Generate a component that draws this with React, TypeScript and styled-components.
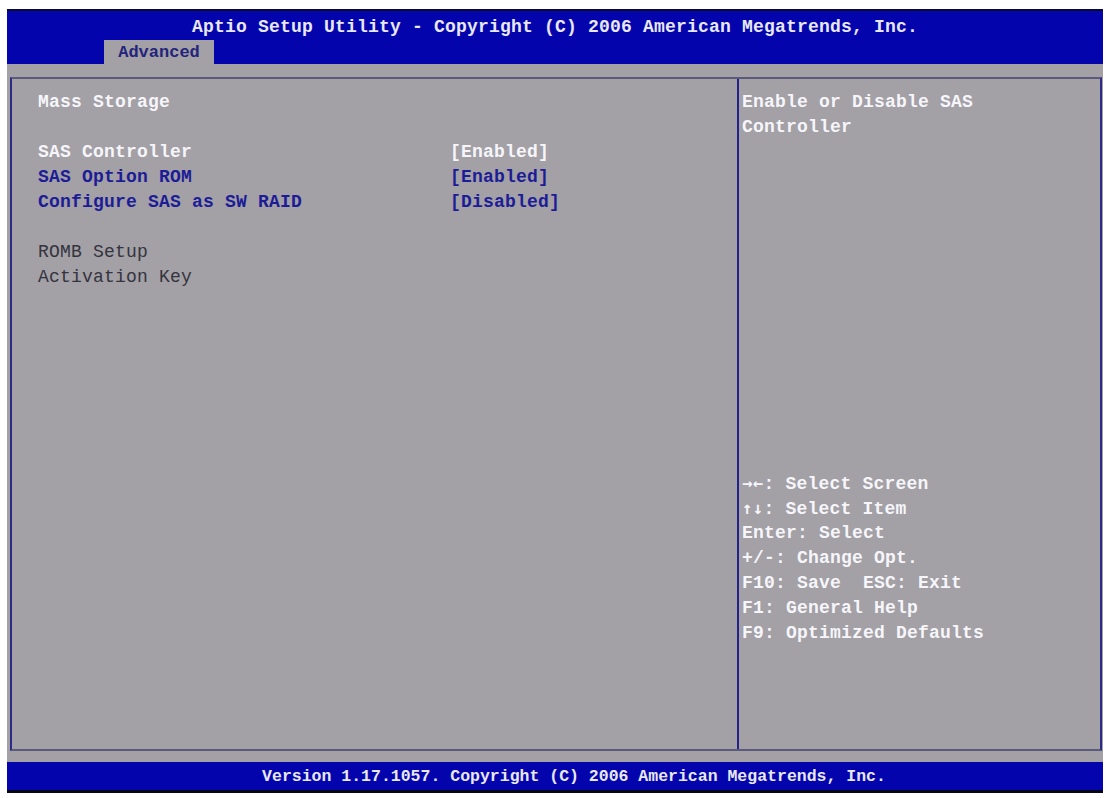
import React from 'react'
import styled, { createGlobalStyle } from 'styled-components'

const GlobalStyle = createGlobalStyle`
  html, body {
    margin: 0;
    padding: 0;
    background: #ffffff;
  }
  body {
    font-family: "Liberation Mono", "DejaVu Sans Mono", monospace;
  }
`

const BLUE = '#0404ac'
const GRAY = '#a3a0a6'

const Screen = styled.div`
  margin: 9px 4px 5px 7px;
  width: 1096px;
  height: 784px;
  display: flex;
  flex-direction: column;
  background: ${GRAY};
  font-family: "Liberation Mono", "DejaVu Sans Mono", monospace;
  font-weight: bold;
`

const Header = styled.div`
  height: 55px;
  background: ${BLUE};
  border-top: 2px solid #0a0a30;
  box-sizing: border-box;
  display: flex;
  flex-direction: column;
`

const Title = styled.div`
  height: 31px;
  display: flex;
  align-items: center;
  justify-content: center;
  color: #e8e8f4;
  font-size: 18px;
  letter-spacing: 0.2px;
  padding-top: 3px;
  box-sizing: border-box;
`

const TabRow = styled.div`
  flex: 1;
  display: flex;
  align-items: flex-end;
  padding-left: 97px;
`

const Tab = styled.div`
  height: 24px;
  width: 110px;
  box-sizing: border-box;
  background: ${GRAY};
  color: #24247c;
  font-size: 17px;
  display: flex;
  align-items: center;
  justify-content: center;
`

const Body = styled.div`
  flex: 1;
  padding: 13px 1px 11px 3px;
  display: flex;
`

const Frame = styled.div`
  flex: 1;
  display: grid;
  grid-template-columns: 727px 1fr;
  border: 2px solid #2c2c86;
  border-top-color: #5c5a7c;
  border-bottom-color: #5c5a7c;
`

const MainPane = styled.div`
  padding: 13px 0 0 26px;
  border-right: 2px solid #22228a;
`

const HelpPane = styled.div`
  padding: 13px 0 0 3px;
  display: flex;
  flex-direction: column;
`

const Line = styled.div<{ $tone?: 'white' | 'blue' | 'dim' }>`
  height: 25px;
  font-size: 18px;
  letter-spacing: 0.2px;
  white-space: pre;
  color: ${(p) =>
    p.$tone === 'blue' ? '#1c1c96' : p.$tone === 'dim' ? '#34343e' : '#f6f6fa'};
  font-weight: ${(p) => (p.$tone === 'dim' ? 'normal' : 'bold')};
`

const Arrows = styled.span`
  font-family: "DejaVu Sans Mono", monospace;
  font-size: 17px;
  letter-spacing: 0.5px;
`

const Spacer = styled.div`
  height: 25px;
`

const OptionRow = styled.div`
  display: grid;
  grid-template-columns: 412px auto;
`

const Keys = styled.div`
  margin-top: 331px;
`

const Footer = styled.div`
  height: 31px;
  background: ${BLUE};
  border-bottom: 3px solid #06061a;
  box-sizing: border-box;
  display: flex;
  align-items: center;
  justify-content: center;
  padding-left: 38px;
  color: #e8e8f4;
  font-size: 16.5px;
`

const options: { label: string; value: string; tone: 'white' | 'blue' }[] = [
  { label: 'SAS Controller', value: '[Enabled]', tone: 'white' },
  { label: 'SAS Option ROM', value: '[Enabled]', tone: 'blue' },
  { label: 'Configure SAS as SW RAID', value: '[Disabled]', tone: 'blue' },
]

const keys: { arrows?: string; text: string }[] = [
  { arrows: '\u2192\u2190', text: ': Select Screen' },
  { arrows: '\u2191\u2193', text: ': Select Item' },
  { text: 'Enter: Select' },
  { text: '+/-: Change Opt.' },
  { text: 'F10: Save  ESC: Exit' },
  { text: 'F1: General Help' },
  { text: 'F9: Optimized Defaults' },
]

export default function App() {
  return (
    <>
      <GlobalStyle />
      <Screen>
        <Header>
          <Title>Aptio Setup Utility - Copyright (C) 2006 American Megatrends, Inc.</Title>
          <TabRow>
            <Tab>Advanced</Tab>
          </TabRow>
        </Header>
        <Body>
          <Frame>
            <MainPane>
              <Line>Mass Storage</Line>
              <Spacer />
              {options.map((o) => (
                <OptionRow key={o.label}>
                  <Line $tone={o.tone}>{o.label}</Line>
                  <Line $tone={o.tone}>{o.value}</Line>
                </OptionRow>
              ))}
              <Spacer />
              <Line $tone="dim">ROMB Setup</Line>
              <Line $tone="dim">Activation Key</Line>
            </MainPane>
            <HelpPane>
              <Line>Enable or Disable SAS</Line>
              <Line>Controller</Line>
              <Keys>
                {keys.map((k) => (
                  <Line key={k.text}>
                    {k.arrows && <Arrows>{k.arrows}</Arrows>}
                    {k.text}
                  </Line>
                ))}
              </Keys>
            </HelpPane>
          </Frame>
        </Body>
        <Footer>Version 1.17.1057. Copyright (C) 2006 American Megatrends, Inc.</Footer>
      </Screen>
    </>
  )
}
